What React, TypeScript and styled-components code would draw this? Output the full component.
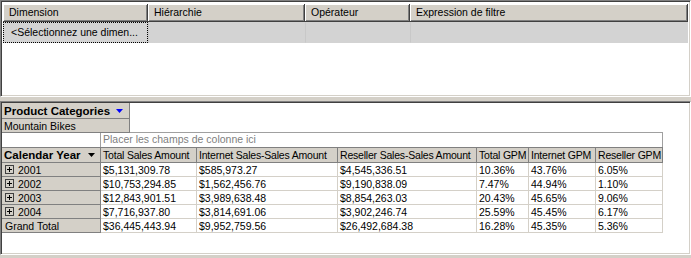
import React from 'react';
import styled, { createGlobalStyle } from 'styled-components';

const GlobalStyle = createGlobalStyle`
  html, body {
    background: #D4D0C8;
    margin: 0;
    padding: 0;
  }
  body {
    color: #000000;
    font-family: 'Liberation Sans', Arial, sans-serif;
    font-size: 10.5px;
  }
`;

const StyledWindow = styled.div`
  display: flex;
  flex-direction: column;
  gap: 4px;
  height: 258px;
  width: 691px;
`;
const StyledPanel = styled.div<{ $height: number; $pad: string }>`
  background: #FFFFFF;
  border-bottom: 1px solid #FFFFFF;
  border-left: 1px solid #808080;
  border-right: 1px solid #FFFFFF;
  border-top: 1px solid #808080;
  box-shadow: inset 1px 1px 0 #404040, inset -1px -1px 0 #D4D0C8;
  box-sizing: border-box;
  height: ${(p) => p.$height}px;
  overflow: hidden;
  padding: ${(p) => p.$pad};
`;

// Filter grid (top)
const StyledFilterRow = styled.div<{ $head?: boolean }>`
  display: grid;
  grid-template-columns: 145px 157px 105px 1fr;
  height: ${(p) => (p.$head ? 18 : 21)}px;
  background: ${(p) => (p.$head ? '#D4D0C8' : '#D3D3D3')};
`;
const StyledHeadCell = styled.div`
  border-bottom: 1px solid #404040;
  border-right: 1px solid #404040;
  box-shadow: inset 1px 1px 0 #FFFFFF, inset -1px -1px 0 #808080;
  box-sizing: border-box;
  line-height: 17px;
  overflow: hidden;
  padding-left: 6px;
  white-space: nowrap;
`;
const StyledSelectCell = styled.div<{ $focus?: boolean }>`
  border: 1px dotted ${(p) => (p.$focus ? '#000000' : 'transparent')};
  border-left-color: ${(p) => (p.$focus ? '#000000' : '#C8C8C8')};
  border-left-style: ${(p) => (p.$focus ? 'dotted' : 'solid')};
  box-sizing: border-box;
  line-height: 19px;
  padding-left: 7px;
  white-space: nowrap;
`;

// Pivot area (bottom)
const StyledFilterBox = styled.div`
  display: flex;
  flex-direction: column;
  width: 128px;
`;
const StyledFieldCell = styled.div<{ $bold?: boolean; $height: number }>`
  align-items: center;
  background: #D4D0C8;
  border-bottom: 1px solid #808080;
  border-right: 1px solid #808080;
  box-sizing: border-box;
  display: flex;
  font-size: ${(p) => (p.$bold ? '11.5px' : '10.5px')};
  font-weight: ${(p) => (p.$bold ? 700 : 400)};
  gap: 6px;
  height: ${(p) => p.$height}px;
  padding-left: 2px;
  white-space: nowrap;
`;
const StyledDropZone = styled.div`
  border: 1px solid #A0A0A0;
  border-bottom: none;
  box-sizing: border-box;
  color: #808080;
  height: 15px;
  line-height: 13px;
  margin-left: 98px;
  margin-top: -1px;
  padding-left: 2px;
  white-space: nowrap;
  width: 563px;
`;
const StyledGrid = styled.div`
  display: grid;
  grid-template-columns: 99px 96px 141px 139px 52px 67px 67px;
  width: 661px;
`;
const StyledCell = styled.div<{ $kind: 'corner' | 'col' | 'row' | 'data' }>`
  align-items: center;
  background: ${(p) => (p.$kind === 'data' ? '#FFFFFF' : '#D4D0C8')};
  border-bottom: 1px solid ${(p) => (p.$kind === 'data' ? '#D4D0C8' : '#808080')};
  border-right: 1px solid ${(p) => (p.$kind === 'data' ? '#D4D0C8' : '#808080')};
  border-top: ${(p) => (p.$kind === 'corner' || p.$kind === 'col' ? '1px solid #808080' : 'none')};
  box-sizing: border-box;
  display: flex;
  font-size: ${(p) => (p.$kind === 'corner' ? '11.5px' : '10.5px')};
  font-weight: ${(p) => (p.$kind === 'corner' ? 700 : 400)};
  gap: ${(p) => (p.$kind === 'corner' ? '7px' : '4px')};
  height: ${(p) => (p.$kind === 'corner' || p.$kind === 'col' ? 16 : 14)}px;
  letter-spacing: ${(p) => (p.$kind === 'col' ? '-0.2px' : 'normal')};
  overflow: hidden;
  padding-left: ${(p) => (p.$kind === 'row' ? '3px' : '2px')};
  white-space: nowrap;
`;

const DropArrow: React.FC<{ color: string }> = ({ color }): JSX.Element => (
  <svg width='7' height='4' viewBox='0 0 7 4'>
    <path d='M0 0h7L3.5 4z' fill={color} />
  </svg>
);
const PlusBox: React.FC = (): JSX.Element => (
  <svg width='9' height='9' viewBox='0 0 9 9'>
    <rect x='0.5' y='0.5' width='8' height='8' fill='#D4D0C8' stroke='#404040' />
    <path d='M2 4.5h5M4.5 2v5' stroke='#000000' />
  </svg>
);

const columns = ['Total Sales Amount', 'Internet Sales-Sales Amount', 'Reseller Sales-Sales Amount', 'Total GPM', 'Internet GPM', 'Reseller GPM'];
const rows: { label: string; expand: boolean; values: string[] }[] = [
  { label: '2001', expand: true, values: ['$5,131,309.78', '$585,973.27', '$4,545,336.51', '10.36%', '43.76%', '6.05%'] },
  { label: '2002', expand: true, values: ['$10,753,294.85', '$1,562,456.76', '$9,190,838.09', '7.47%', '44.94%', '1.10%'] },
  { label: '2003', expand: true, values: ['$12,843,901.51', '$3,989,638.48', '$8,854,263.03', '20.43%', '45.65%', '9.06%'] },
  { label: '2004', expand: true, values: ['$7,716,937.80', '$3,814,691.06', '$3,902,246.74', '25.59%', '45.45%', '6.17%'] },
  { label: 'Grand Total', expand: false, values: ['$36,445,443.94', '$9,952,759.56', '$26,492,684.38', '16.28%', '45.35%', '5.36%'] }
];

const App: React.FC<any> = (): JSX.Element => {
  return (
    <>
      <GlobalStyle />
      <StyledWindow>
        <StyledPanel $height={97} $pad='3px 2px 0 2px'>
          <StyledFilterRow $head>
            <StyledHeadCell>Dimension</StyledHeadCell>
            <StyledHeadCell>Hiérarchie</StyledHeadCell>
            <StyledHeadCell>Opérateur</StyledHeadCell>
            <StyledHeadCell>Expression de filtre</StyledHeadCell>
          </StyledFilterRow>
          <StyledFilterRow>
            <StyledSelectCell $focus>&lt;Sélectionnez une dimen...</StyledSelectCell>
            <StyledSelectCell />
            <StyledSelectCell />
            <StyledSelectCell />
          </StyledFilterRow>
        </StyledPanel>
        <StyledPanel $height={154} $pad='1px 0 0 1px'>
          <StyledFilterBox>
            <StyledFieldCell $bold $height={16}>Product Categories <DropArrow color='#0000FF' /></StyledFieldCell>
            <StyledFieldCell $height={14}>Mountain Bikes</StyledFieldCell>
          </StyledFilterBox>
          <StyledDropZone>Placer les champs de colonne ici</StyledDropZone>
          <StyledGrid>
            <StyledCell $kind='corner'>Calendar Year <DropArrow color='#000000' /></StyledCell>
            {columns.map((c) => <StyledCell key={c} $kind='col'>{c}</StyledCell>)}
            {rows.map((r) => (
              <React.Fragment key={r.label}>
                <StyledCell $kind='row'>{r.expand && <PlusBox />}{r.label}</StyledCell>
                {r.values.map((v, i) => <StyledCell key={i} $kind='data'>{v}</StyledCell>)}
              </React.Fragment>
            ))}
          </StyledGrid>
        </StyledPanel>
      </StyledWindow>
    </>
  );
}

export default App;
